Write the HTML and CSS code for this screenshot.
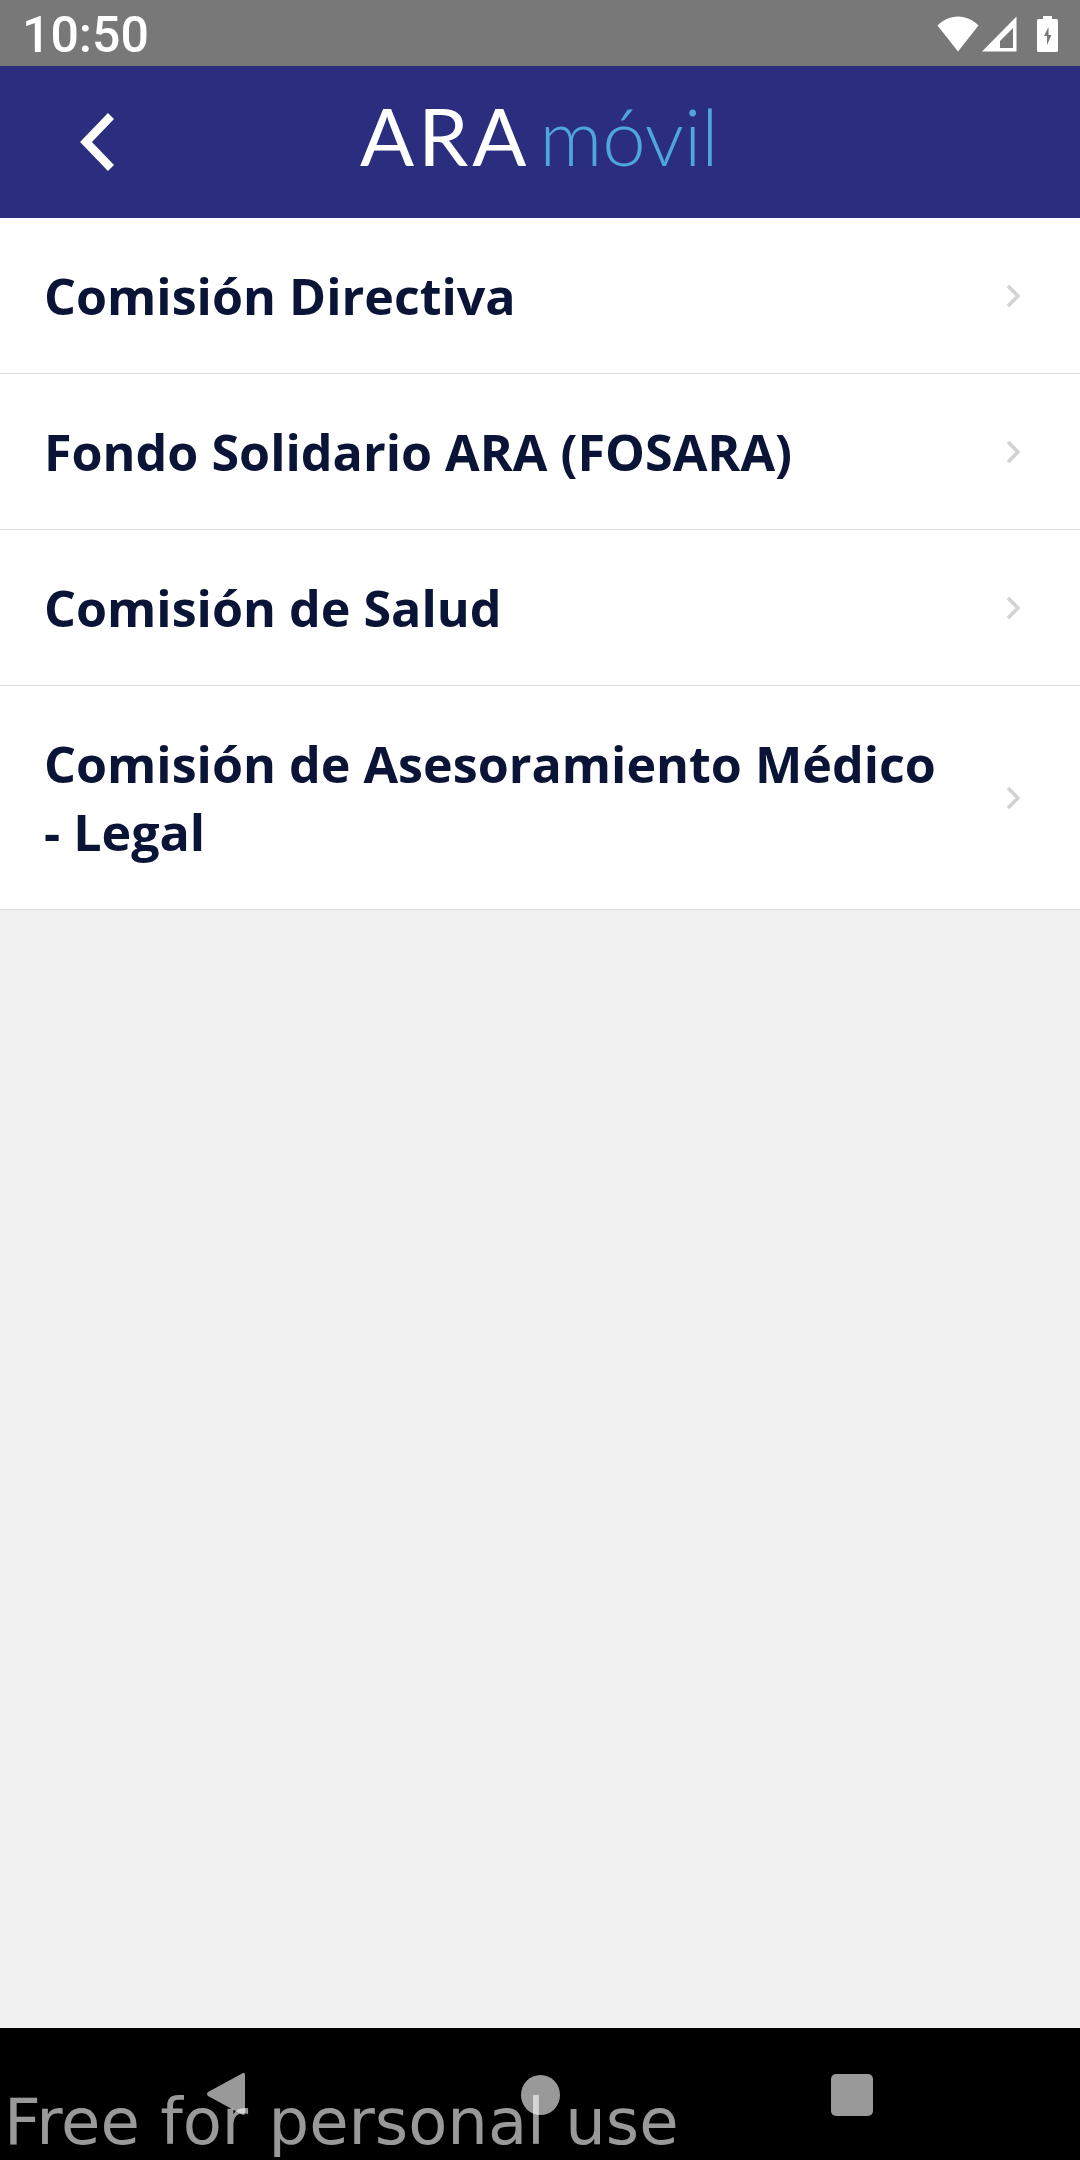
FILE: index.html
```html
<!DOCTYPE html>
<html lang="es">
<head>
<meta charset="utf-8">
<title>ARA móvil</title>
<link rel="stylesheet" href="styles.css">
</head>
<body>
<div class="screen">
  <div class="status">
    <span class="time">10:50</span>
    <div class="status-icons">
      <svg class="wifi" width="42" height="36" viewBox="0 0 42 36"><path d="M21 35.500 0.500 9.500C6 4 13 0.500 21 0.500s15 3.500 20.500 9z" fill="#fff"/></svg>
      <svg class="signal" width="35" height="36" viewBox="0 0 35 36"><path d="M0 35.500 34.500.5v35zM18 32h13V12L18 25z" fill="#fff" fill-rule="evenodd"/></svg>
      <svg class="battery" width="21" height="36" viewBox="0 0 21 36"><path d="M6 0h9v3h4.500q1.500 0 1.500 1.500v30q0 1.500-1.500 1.500h-18Q0 36 0 34.500v-30Q0 3 1.500 3H6z" fill="#fff"/><path d="M11.500 11 7 20h3v9l4.500-10h-3z" fill="#787878"/></svg>
    </div>
  </div>
  <header class="appbar">
    <svg class="back" width="34" height="58" viewBox="0 0 34 58"><path d="M31 3 6 29l25 26" fill="none" stroke="#fff" stroke-width="8.500"/></svg>
    <div class="logo"><span class="logo-ara">ARA</span><span class="logo-movil">móvil</span></div>
  </header>
  <main class="list">
    <a class="row"><span class="label">Comisión Directiva</span><svg class="chev" width="14" height="24" viewBox="0 0 14 24"><path d="M2 2l10 10L2 22" fill="none" stroke="#d2d2d2" stroke-width="3.500"/></svg></a>
    <a class="row"><span class="label">Fondo Solidario ARA (FOSARA)</span><svg class="chev" width="14" height="24" viewBox="0 0 14 24"><path d="M2 2l10 10L2 22" fill="none" stroke="#d2d2d2" stroke-width="3.500"/></svg></a>
    <a class="row"><span class="label">Comisión de Salud</span><svg class="chev" width="14" height="24" viewBox="0 0 14 24"><path d="M2 2l10 10L2 22" fill="none" stroke="#d2d2d2" stroke-width="3.500"/></svg></a>
    <a class="row row-tall"><span class="label">Comisión de Asesoramiento Médico - Legal</span><svg class="chev" width="14" height="24" viewBox="0 0 14 24"><path d="M2 2l10 10L2 22" fill="none" stroke="#d2d2d2" stroke-width="3.500"/></svg></a>
  </main>
  <nav class="navbar">
    <svg width="38" height="44" viewBox="0 0 38 44"><path d="M36 1q2-1 2 2v38q0 2-2 2L1 24q-2-2 0-4z" fill="#999"/></svg>
    <svg width="39" height="40" viewBox="0 0 39 40"><ellipse cx="19.500" cy="20" rx="19.500" ry="20" fill="#999"/></svg>
    <svg width="42" height="42" viewBox="0 0 42 42"><rect width="42" height="42" rx="5" fill="#999"/></svg>
    <span class="watermark">Free for personal use</span>
  </nav>
</div>
</body>
</html>
```
FILE: styles.css
```css
* { box-sizing: border-box; }
html, body { margin: 0; padding: 0; }
.screen {
  width: 1080px;
  height: 2160px;
  display: flex;
  flex-direction: column;
  background: #f1f1f1;
  overflow: hidden;
}
.status {
  height: 66px;
  flex: none;
  background: #787878;
  display: flex;
  align-items: center;
  justify-content: space-between;
  padding: 3px 22px 0 22px;
}
.time {
  font: 500 50px/1 Roboto, sans-serif;
  color: #fff;
}
.status-icons {
  display: flex;
  align-items: center;
  gap: 3px;
  margin-top: -2px;
}
.battery { margin-left: 17px; }
.appbar {
  height: 152px;
  flex: none;
  background: #2b2e7e;
  display: flex;
  align-items: center;
  position: relative;
  padding-left: 80px;
}
.logo {
  position: absolute;
  left: 360px;
  top: 21px;
  display: flex;
  align-items: baseline;
  gap: 9px;
}
.logo-ara {
  font: 400 80px/1.2 Lato, sans-serif;
  color: #fff;
  letter-spacing: 4px;
}
.logo-movil {
  font: 300 78px/1.2 Lato, sans-serif;
  color: #4ea6dc;
}
.list { background: #fff; }
.row {
  display: flex;
  align-items: center;
  justify-content: space-between;
  height: 156px;
  padding: 0 60px 0 44px;
  border-bottom: 1px solid #dcdcdc;
}
.row-tall { height: 224px; }
.label {
  font: 700 50.2px/68px "Open Sans", sans-serif;
  color: #0a1436;
  max-width: 900px;
}
.navbar {
  margin-top: auto;
  height: 132px;
  flex: none;
  background: #000;
  position: relative;
  display: flex;
  align-items: flex-start;
  padding: 44px 0 0 207px;
}
.navbar svg:nth-child(2) { margin-left: 276px; margin-top: 3px; }
.navbar svg:nth-child(3) { margin-left: 271px; margin-top: 2px; }
.watermark {
  position: absolute;
  left: 4px;
  top: 62px;
  font: 400 64px/1 "DejaVu Sans", sans-serif;
  color: rgba(255,255,255,.6);
  white-space: nowrap;
}
```
